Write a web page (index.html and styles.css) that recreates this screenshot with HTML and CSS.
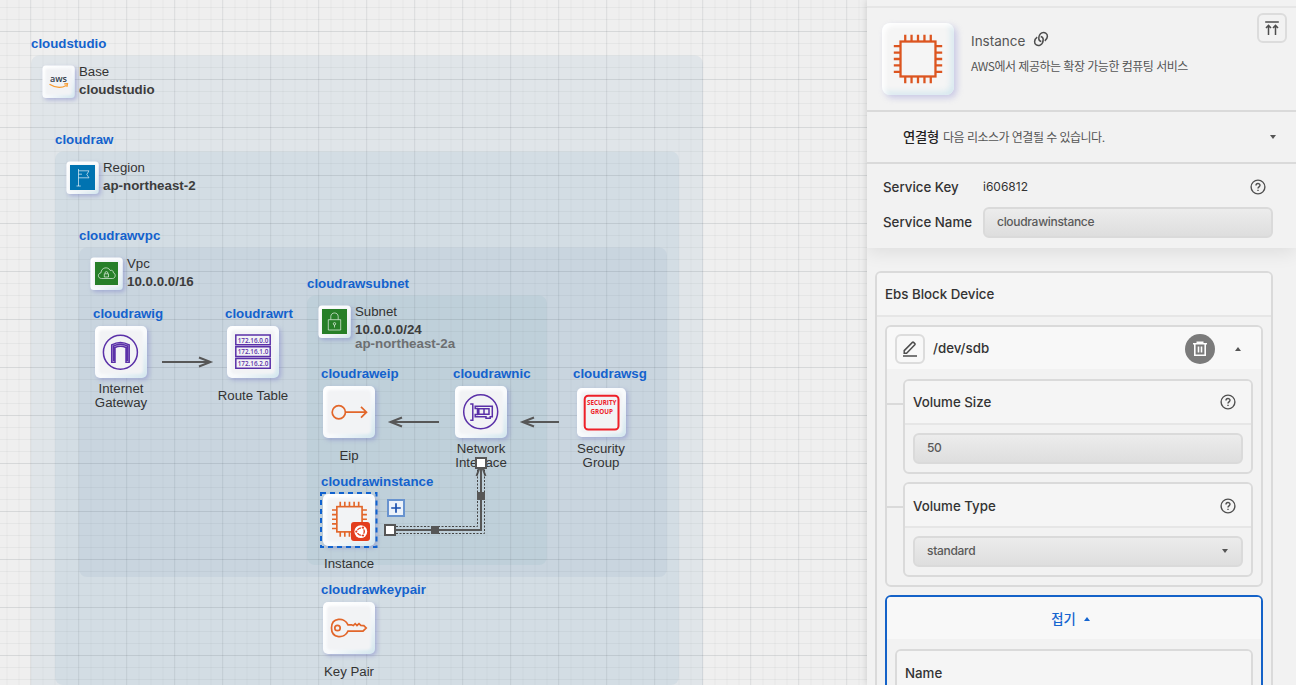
FILE: index.html
```html
<!DOCTYPE html>
<html lang="ko">
<head>
<meta charset="utf-8">
<title>cloudstudio</title>
<link rel="stylesheet" href="styles.css">
</head>
<body>
<div class="app">
  <main class="canvas">
    <svg class="diagram" width="867" height="685" viewBox="0 0 867 685">
      <defs>
        <linearGradient id="bevel" x1="0" y1="0" x2="1" y2="1">
          <stop offset="0" stop-color="#fff"/><stop offset=".55" stop-color="#f8fafc"/><stop offset="1" stop-color="#d3e6ee"/>
        </linearGradient>
        <filter id="soft" x="-20%" y="-20%" width="140%" height="140%"><feGaussianBlur stdDeviation="1.3"/></filter>
        <pattern id="minor" x="30" y="7" width="12" height="12" patternUnits="userSpaceOnUse">
          <rect class="minor-v" width="2" height="12"/><rect class="minor-h" width="12" height="1"/>
        </pattern>
        <pattern id="major" x="30" y="31" width="48" height="48" patternUnits="userSpaceOnUse">
          <rect class="major-v" width="1" height="48"/><rect class="major-h" width="48" height="1"/>
        </pattern>
        <g id="tile">
          <rect class="tile" width="52" height="52" rx="5"/>
          <rect class="tile-face" x="4" y="4" width="44" height="44" rx="4"/>
        </g>
        <g id="tile-small">
          <rect class="tile" width="32.4" height="32.4" rx="3.5"/>
          <rect class="tile-face" x="3" y="3" width="26.4" height="26.4" rx="2"/>
        </g>
        <g id="chip">
          <rect x="5" y="5" width="26" height="26"/>
          <path d="M8.5 5V0M13.2 5V0M18 5V0M22.8 5V0M27.5 5V0M8.5 36V31M13.2 36V31M18 36V31M22.8 36V31M27.5 36V31M5 8.5H0M5 13.2H0M5 18H0M5 22.8H0M5 27.5H0M36 8.5H31M36 13.2H31M36 18H31M36 22.8H31M36 27.5H31"/>
        </g>
      </defs>

      <rect class="group base" x="31" y="55.5" width="672" height="660" rx="8"/>
      <rect class="group region" x="55" y="151.5" width="624" height="533.5" rx="8"/>
      <rect class="group vpc" x="79" y="247.5" width="588" height="329.5" rx="8"/>
      <rect class="group subnet" x="307" y="295.5" width="240" height="269.5" rx="8"/>
      <rect width="867" height="685" fill="url(#minor)"/>
      <rect width="867" height="685" fill="url(#major)"/>

      <g class="ids">
        <text x="31" y="48">cloudstudio</text>
        <text x="55" y="144">cloudraw</text>
        <text x="79" y="240">cloudrawvpc</text>
        <text x="93" y="318">cloudrawig</text>
        <text x="225" y="318">cloudrawrt</text>
        <text x="307" y="288">cloudrawsubnet</text>
        <text x="321" y="378">cloudraweip</text>
        <text x="453" y="378">cloudrawnic</text>
        <text x="573" y="378">cloudrawsg</text>
        <text x="321" y="486">cloudrawinstance</text>
        <text x="321" y="594">cloudrawkeypair</text>
      </g>

      <g class="names">
        <text x="79" y="76">Base</text><text class="strong" x="79" y="94">cloudstudio</text>
        <text x="103" y="172">Region</text><text class="strong" x="103" y="190">ap-northeast-2</text>
        <text x="127" y="268">Vpc</text><text class="strong" x="127" y="286">10.0.0.0/16</text>
        <text x="355" y="316">Subnet</text><text class="strong" x="355" y="334">10.0.0.0/24</text>
        <text class="strong zone" x="355" y="348">ap-northeast-2a</text>
      </g>

      <g class="captions">
        <text x="121" y="393">Internet</text><text x="121" y="407">Gateway</text>
        <text x="253" y="400">Route Table</text>
        <text x="349" y="460">Eip</text>
        <text x="481" y="453">Network</text><text x="481" y="467">Interface</text>
        <text x="601" y="453">Security</text><text x="601" y="467">Group</text>
        <text x="349" y="568">Instance</text>
        <text x="349" y="676">Key Pair</text>
      </g>

      <!-- group badges -->
      <use href="#tile-small" x="42.4" y="65.5"/>
      <text class="aws" x="58.5" y="82.2" textLength="17" lengthAdjust="spacingAndGlyphs">aws</text>
      <path class="aws-smile" d="M49.5 84.2Q58.5 89.8 66.3 85.4M64.2 83.8L67.5 83.6L66.9 86.8"/>
      <use href="#tile-small" x="66.4" y="161.5"/>
      <rect x="70" y="165" width="25" height="25" fill="#0073b1"/>
      <path class="badge-line" d="M78.5 169V186M76.5 186H80.8M78.5 170.8H89L86.8 174.5L89 177.8H78.5M78.5 174.2H82"/>
      <use href="#tile-small" x="90.4" y="257.5"/>
      <rect x="95" y="262" width="23" height="23" fill="#277f28"/>
      <path class="badge-line" d="M101.5 278.5C97.5 278.5 97.4 273.3 101 272.8C101 267.5 108 266 110.2 270.5C112.2 269.7 113.4 271.2 113.4 272.8C116 273.5 115.8 278.5 112.5 278.5ZM104.3 273.8H108.5V277H104.3ZM105.1 273.5V272.2Q106.4 271 107.7 272.2V273.5"/>
      <use href="#tile-small" x="318.4" y="305.5"/>
      <rect x="322" y="309" width="25" height="25" fill="#277f28"/>
      <path class="badge-line" d="M328.3 319.7H340.7V330H328.3ZM330.8 319.5V316.5C330.8 311.8 338.2 311.8 338.2 316.5V319.5M334.5 325V327.5"/>
      <circle class="badge-line" cx="334.5" cy="323.8" r="1.2"/>

      <!-- internet gateway -->
      <use href="#tile" x="95" y="326"/>
      <g class="violet">
        <circle cx="120.4" cy="352.3" r="17"/>
        <path d="M111.7 362.3V344.8Q120.4 340 129.2 344.8V362.3H126V347.5Q120.4 345 115 347.5V362.3ZM113.5 361V346Q120.4 342.6 127.5 346V361"/>
      </g>
      <!-- route table -->
      <use href="#tile" x="227" y="326"/>
      <g class="violet">
        <path d="M235.8 335H270.2V344.7H235.8ZM235.8 346.7H270.2V356.4H235.8ZM235.8 358.6H270.2V368.3H235.8Z"/>
      </g>
      <g class="routes">
        <text x="253" y="342.5" textLength="30.5" lengthAdjust="spacingAndGlyphs">172.16.0.0</text>
        <text x="253" y="354.2" textLength="30.5" lengthAdjust="spacingAndGlyphs">172.16.1.0</text>
        <text x="253" y="366" textLength="30.5" lengthAdjust="spacingAndGlyphs">172.16.2.0</text>
      </g>
      <!-- elastic ip -->
      <use href="#tile" x="323" y="386"/>
      <g class="orange"><circle cx="338.8" cy="412.2" r="6.6"/><path d="M345.5 412.2H366.5M361 406.8L366.5 412.2L361 417.6"/></g>
      <!-- network interface -->
      <use href="#tile" x="455" y="386"/>
      <g class="violet">
        <circle cx="480.7" cy="411.7" r="17"/>
        <path d="M470.2 404H472.8V420.2H470.2M475.2 406.2H492.3V416.8H490.2V418.3H486V416.8H475.2V414.6H477.5V408.5H475.2ZM478.8 408.8H489V414.2H478.8ZM484 408.8V414.2"/>
      </g>
      <!-- security group -->
      <use href="#tile" transform="translate(577 388) scale(.942)"/>
      <rect class="sg-box" x="584.7" y="395.7" width="33.8" height="33.8" rx="3.5"/>
      <g class="sg"><text x="601.7" y="404.9" textLength="29.5" lengthAdjust="spacingAndGlyphs">SECURITY</text><text x="601.7" y="413.8" textLength="22.3" lengthAdjust="spacingAndGlyphs">GROUP</text></g>
      <!-- instance -->
      <use href="#tile" x="323" y="494"/>
      <rect class="selection" x="321" y="493" width="55.5" height="54"/>
      <use class="orange" href="#chip" transform="translate(332 501.8) scale(.97)"/>
      <rect x="351" y="522" width="19" height="19" rx="3" fill="#e33d1d"/>
      <circle cx="360.8" cy="531.6" r="6.4" fill="#fff"/>
      <circle class="ubuntu-ring" cx="360.8" cy="531.6" r="3.5"/>
      <path class="ubuntu-gap" d="M359 531.6H355.5M361.7 533.2L363.4 536.2M361.7 530L363.4 527"/>
      <circle cx="356.3" cy="531.6" r="1.1" fill="#e33d1d"/>
      <circle cx="363" cy="535.5" r="1.1" fill="#e33d1d"/>
      <circle cx="363" cy="527.7" r="1.1" fill="#e33d1d"/>
      <rect class="add" x="388" y="500" width="16" height="16"/>
      <path class="add-plus" d="M396 503.2V512.8M391.2 508H400.8"/>
      <!-- key pair -->
      <use href="#tile" x="323" y="602"/>
      <g class="orange">
        <circle cx="337.5" cy="628" r="2.7"/>
        <path d="M348 624.8C344.5 616.8 331.5 617.5 331.5 628C331.5 638.5 344.5 639.2 348 631.2H363L366.2 628L363.8 625.6L360.8 625.4L359 623.7L357 625.5L355.2 623.7L353.3 625.5L351.5 624.8Z"/>
      </g>

      <!-- links -->
      <g class="link">
        <path d="M162 362H211M199 357.5L210.5 362L199 366.5"/>
        <path d="M439 422H391M402 417.5L390.5 422L402 426.5"/>
        <path d="M559 422H523M534 417.5L522.5 422L534 426.5"/>
        <path d="M390 530H481V465M476.5 476L481 464L485.5 476"/>
      </g>
      <path class="outline" d="M396 526.5H477.5V469M396 533.5H484.5V469"/>
      <rect class="mid" x="431" y="526" width="8" height="8"/>
      <rect class="mid" x="477" y="492" width="8" height="8"/>
      <rect class="end" x="385" y="525" width="10" height="10"/>
      <rect class="end" x="476" y="458" width="10" height="10"/>
    </svg>
  </main>

  <aside class="panel">
    <header class="summary">
      <div class="hero-tile">
        <svg width="50" height="50" viewBox="-.6 -.6 37.2 37.2"><g class="hero-chip">
          <rect x="5" y="5" width="26" height="26"/>
          <path d="M8.5 5V0M13.2 5V0M18 5V0M22.8 5V0M27.5 5V0M8.5 36V31M13.2 36V31M18 36V31M22.8 36V31M27.5 36V31M5 8.5H0M5 13.2H0M5 18H0M5 22.8H0M5 27.5H0M36 8.5H31M36 13.2H31M36 18H31M36 22.8H31M36 27.5H31"/></g></svg>
      </div>
      <div class="summary-text">
        <div class="summary-title">Instance
          <svg class="line-icon" width="16" height="16" viewBox="0 0 16 16"><path d="M8.3 10.6C6.5 10.2 5.8 9 5.8 7.5C5.8 5 7 2.8 8.8 1.9C11.5 .6 14.6 2.4 14.4 5.4C14.3 7.4 13 8.9 11.8 9.8M7.7 5.4C9.5 5.8 10.2 7 10.2 8.5C10.2 11 9 13.2 7.2 14.1C4.5 15.4 1.4 13.6 1.6 10.6C1.7 8.6 3 7.1 4.2 6.2"/></svg>
        </div>
        <div class="summary-desc">AWS에서 제공하는 확장 가능한 컴퓨팅 서비스</div>
      </div>
      <button class="square-btn"><svg class="line-icon" width="16" height="16" viewBox="0 0 16 16"><path d="M1.2 2H14.8M4.5 15V5.5M11.5 15V5.5M2 8L4.5 5.3L7 8M9 8L11.5 5.3L14 8"/></svg></button>
    </header>
    <section class="links">
      <strong>연결형</strong><span>다음 리소스가 연결될 수 있습니다.</span><i class="caret down"></i>
    </section>
    <section class="service">
      <div class="service-row"><label>Service Key</label><span class="key">i606812</span>
        <svg class="help" width="16" height="16" viewBox="0 0 16 16"><circle cx="8" cy="8" r="6.9"/><path d="M6 6.5C6 3.8 10 3.9 10 6.3C10 7.8 8 7.9 8 9.5M8 10.8V12"/></svg></div>
      <div class="service-row"><label>Service Name</label><div class="field">cloudrawinstance</div></div>
    </section>
    <div class="settings">
      <section class="box">
        <h2 class="box-head">Ebs Block Device</h2>
        <div class="box-body">
          <article class="device">
            <div class="device-head">
              <button class="square-btn"><svg class="line-icon" width="16" height="16" viewBox="0 0 16 16"><path d="M1 15H15M2.2 12.2V9.6L10.4 1.4Q11 .9 11.6 1.4L12.8 2.6Q13.3 3.2 12.8 3.8L4.6 12.2Z"/></svg></button>
              <span class="path">/dev/sdb</span>
              <button class="trash"><svg width="16" height="18" viewBox="0 0 16 18"><path d="M1 3.8H15M4.5 2.2H11.5M2.8 4V15.3H13.2V4M6.5 6.5V12.5M9.5 6.5V12.5"/></svg></button>
              <i class="caret up"></i>
            </div>
            <div class="device-body">
              <div class="param">
                <div class="param-head">Volume Size<svg class="help" width="16" height="16" viewBox="0 0 16 16"><circle cx="8" cy="8" r="6.9"/><path d="M6 6.5C6 3.8 10 3.9 10 6.3C10 7.8 8 7.9 8 9.5M8 10.8V12"/></svg></div>
                <div class="param-body"><div class="field">50</div></div>
              </div>
              <div class="param">
                <div class="param-head low">Volume Type<svg class="help" width="16" height="16" viewBox="0 0 16 16"><circle cx="8" cy="8" r="6.9"/><path d="M6 6.5C6 3.8 10 3.9 10 6.3C10 7.8 8 7.9 8 9.5M8 10.8V12"/></svg></div>
                <div class="param-body"><div class="field">standard<i class="caret down"></i></div></div>
              </div>
            </div>
          </article>
          <article class="device active">
            <div class="device-head fold">접기<i class="caret up"></i></div>
            <div class="device-body">
              <div class="param"><div class="param-head low">Name</div><div class="param-body"><div class="field"></div></div></div>
            </div>
          </article>
        </div>
      </section>
    </div>
  </aside>
</div>
</body>
</html>
```
FILE: styles.css
```css
* { box-sizing: border-box; }
body { margin: 0; overflow: hidden; font-family: Inter, "Noto Sans CJK KR", sans-serif; color: #333; }
.app { display: flex; width: 1296px; height: 685px; overflow: hidden; background: #efefef; }
.canvas { width: 867px; flex: none; }
.diagram { display: block; font-family: "Liberation Sans", Arial, sans-serif; font-size: 13.25px; }

.base { fill: #e0e5e9; }
.region { fill: #d3dde4; }
.vpc { fill: #c9d5df; }
.subnet { fill: #bfd0da; }
.minor-h { fill: rgba(70, 80, 90, .06); }
.minor-v { fill: rgba(70, 80, 90, .025); }
.major-v { fill: rgba(70, 80, 90, .08); }
.major-h { fill: rgba(70, 80, 90, .09); }

.tile { fill: url(#bevel); filter: drop-shadow(2px 2px 2px rgba(125, 130, 200, .5)); }
.tile-face { fill: #f2f3f5; filter: url(#soft); }
.ids { fill: #1462cd; font-weight: 700; font-size: 13.3px; }
.names { fill: #333; }
.strong { font-weight: 700; font-size: 13.35px; fill: #3c3c3c; }
.names .zone { fill: #6d6f71; }
.captions { fill: #333; text-anchor: middle; }
.aws { font: 600 9.5px "Open Sans", sans-serif; fill: #333e4c; text-anchor: middle; }
.aws-smile { fill: none; stroke: #f79a2c; stroke-width: 1.2; }
.badge-line { fill: none; stroke: rgba(255, 255, 255, .7); stroke-width: .9; }
.violet { fill: none; stroke: #5a30a8; stroke-width: 1.5; }
.orange { fill: none; stroke: #e2662a; stroke-width: 1.7; }
.routes { font: 600 7px "Open Sans", sans-serif; fill: #5a30a8; text-anchor: middle; }
.sg-box { fill: none; stroke: #ee2029; stroke-width: 2; }
.sg { font: 700 6.4px "Open Sans", sans-serif; fill: #ee2029; text-anchor: middle; }
.selection { fill: none; stroke: #1062cf; stroke-width: 2; stroke-dasharray: 5 4; }
.ubuntu-ring { fill: none; stroke: #e33d1d; stroke-width: 1.4; }
.ubuntu-gap { fill: none; stroke: #fff; stroke-width: 2.6; }
.add { fill: #ecf2fa; stroke: #6893cf; stroke-width: 2; }
.add-plus { stroke: #194fae; stroke-width: 1.7; }
.link { fill: none; stroke: #575757; stroke-width: 2; }
.outline { fill: none; stroke: #444; stroke-width: 1; stroke-dasharray: 2 1.5; }
.mid { fill: #575757; }
.end { fill: #fff; stroke: #575757; stroke-width: 2; }

.panel { width: 429px; flex: none; display: flex; flex-direction: column; padding-top: 6px; background: #f2f2f2; box-shadow: 0 0 7px rgba(0, 0, 0, .16); }
.summary { height: 106px; flex: none; display: flex; align-items: flex-start; padding: 15px 9px 0 15px; border-top: 2px solid #e6e6e6; border-bottom: 2px solid #dadada; }
.hero-tile { width: 72px; height: 72px; flex: none; display: flex; align-items: center; justify-content: center; border-radius: 8px; background: #f5f5f5; box-shadow: 3px 3px 6px rgba(140, 140, 210, .4), inset 3px 3px 5px #fff, inset -3px -3px 6px #d5e8ef; }
.hero-chip { fill: none; stroke: #dc5520; stroke-width: 1.7; }
.summary-text { flex: 1; margin: 8px 0 0 17px; }
.summary-title { display: flex; align-items: center; gap: 8px; height: 20px; font-size: 13.5px; color: #555; }
.summary-title .line-icon { margin-top: -4px; }
.summary-desc { margin-top: 6px; font: 12px/18px "Noto Sans CJK KR", sans-serif; color: #555; letter-spacing: -.5px; white-space: nowrap; }
.line-icon { fill: none; stroke: #4d4d4d; stroke-width: 1.5; }
.square-btn { width: 30px; height: 30px; flex: none; display: flex; align-items: center; justify-content: center; padding: 0; border: 2px solid #dcdcdc; border-radius: 6px; background: transparent; }
.summary .square-btn { margin-top: -10px; }
.links { height: 52px; flex: none; display: flex; align-items: center; gap: 4px; padding: 0 20px 2px 36px; border-bottom: 2px solid #dadada; font-size: 12px; letter-spacing: -.53px; color: #555; }
.links strong { font-size: 13.3px; font-weight: 500; letter-spacing: -.2px; color: #222; }
.links .caret { margin: 2px 0 0 auto; }
.caret { width: 0; height: 0; border: 3.5px solid transparent; }
.caret.down { border-top: 4px solid #555; border-bottom: 0; }
.caret.up { border-bottom: 4px solid #555; border-top: 0; }
.service { height: 84px; flex: none; padding: 7px 23px 0 16px; z-index: 1; box-shadow: 0 4px 18px rgba(0, 0, 0, .09); background: #f2f2f2; clip-path: inset(0 0 -30px 0); }
.service-row { display: flex; align-items: center; height: 31px; font-size: 13.3px; font-weight: 500; }
.service-row + .service-row { margin-top: 4px; }
.service-row label { width: 100px; flex: none; white-space: nowrap; }
.service-row .field { flex: 1; position: relative; top: 1px; }
.key { font-size: 12px; font-weight: 400; }
.service .help { margin: 0 7px 0 auto; }
.help { fill: none; stroke: #505050; stroke-width: 1.4; margin-left: auto; }
.field { height: 31px; display: flex; align-items: center; justify-content: space-between; padding: 0 13px 2px 12px; border: 2px solid #dadada; border-radius: 6px; background: linear-gradient(#ececec, #dedede); font-size: 12px; font-weight: 500; letter-spacing: -.3px; color: #5a5a5a; }
.settings { padding: 23px 23px 0 8px; }
.box { border: 2px solid #dadada; border-radius: 6px; }
.box-head { height: 44px; margin: 0; padding: 0 8px; border-bottom: 2px solid #e6e6e6; border-radius: 4px 4px 0 0; background: #f5f5f5; font-size: 13.3px; font-weight: 500; line-height: 42px; }
.box-body { display: flex; flex-direction: column; gap: 8px; padding: 8px; }
.device { border: 2px solid #dadada; border-radius: 6px; }
.device-head { height: 44px; display: flex; align-items: center; padding: 2px 20px 0 8px; border-bottom: 2px solid #f2f2f2; border-radius: 4px 4px 0 0; background: #f8f8f8; font-size: 13.3px; font-weight: 500; }
.path { margin: -2px 0 0 8px; }
.trash { width: 30px; height: 30px; margin: 0 20px 0 auto; padding: 0; display: flex; align-items: center; justify-content: center; border: 0; border-radius: 50%; background: #7b7b7b; }
.trash svg { fill: none; stroke: #fff; stroke-width: 1.6; }
.device-body { display: flex; flex-direction: column; gap: 8px; padding: 8px 8px 8px 16px; }
.param { position: relative; border: 2px solid #dadada; border-radius: 6px; }
.param::before { content: ""; position: absolute; left: -18px; top: 22px; width: 16px; height: 2px; background: #dadada; }
.param-head { height: 44px; display: flex; align-items: center; padding: 0 15px 0 8px; border-bottom: 2px solid #e6e6e6; border-radius: 4px 4px 0 0; background: #f5f5f5; font-size: 13.3px; font-weight: 500; }
.param-head.low { padding-top: 2px; }
.param-body { padding: 8px; }
.active { border-color: #1462c8; }
.fold { justify-content: center; gap: 8px; padding: 0 12px 0 5px; color: #1565d0; }
.fold .caret { border-bottom-color: #1565d0; margin-top: 2px; }
.active .device-body { padding-left: 8px; }
.active .param::before { display: none; }
```
